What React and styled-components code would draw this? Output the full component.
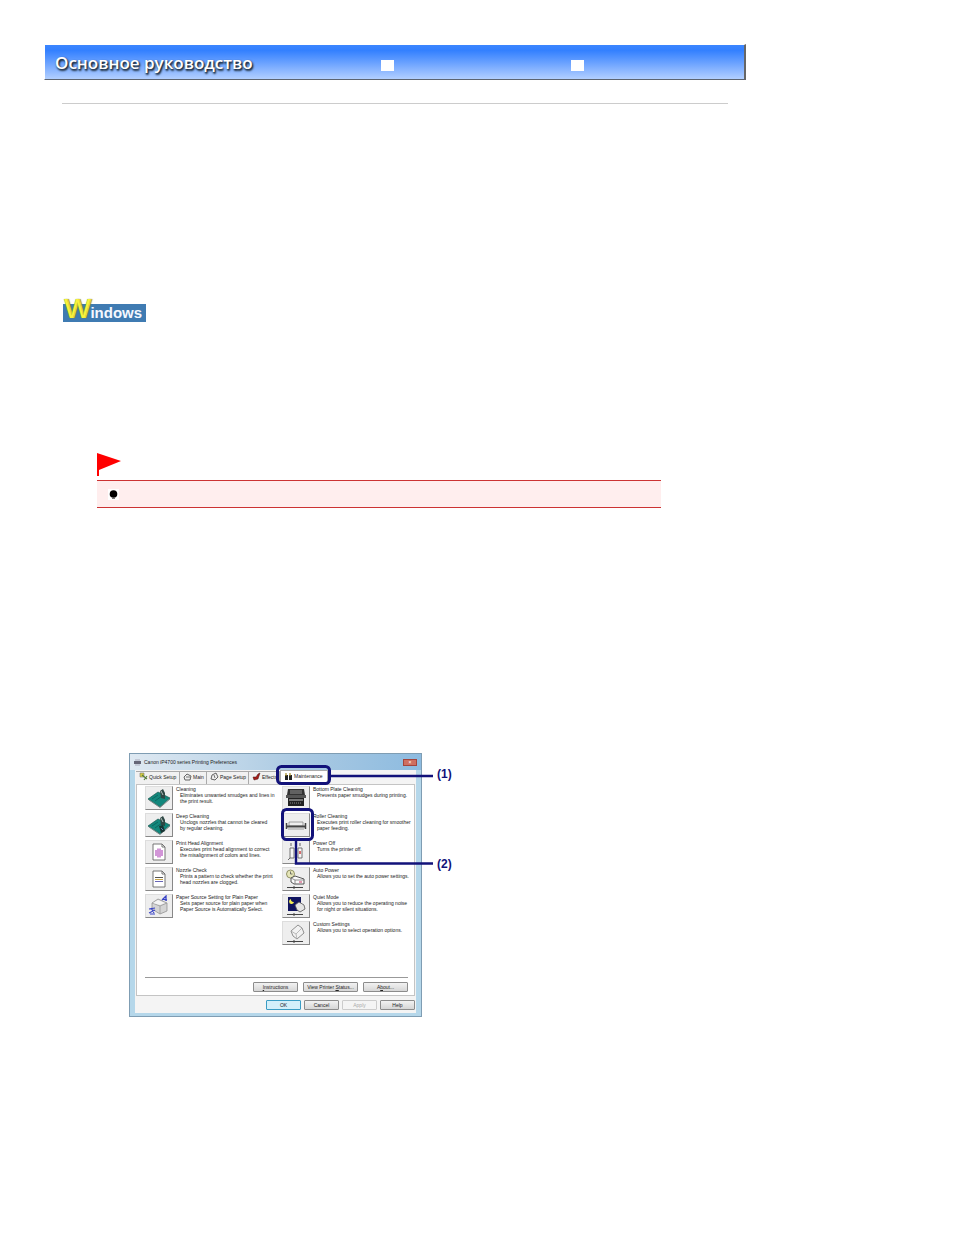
import styled, { createGlobalStyle } from "styled-components";

const tabs = [
  { id: "quick", label: "Quick Setup", width: 44 },
  { id: "main", label: "Main", width: 27 },
  { id: "page", label: "Page Setup", width: 42 },
  { id: "effects", label: "Effects", width: 31 },
  { id: "maintenance", label: "Maintenance", width: 48, active: true },
];

const leftTasks = [
  {
    icon: "cleaning",
    title: "Cleaning",
    lines: ["Eliminates unwanted smudges and lines in", "the print result."],
  },
  {
    icon: "deep",
    title: "Deep Cleaning",
    lines: ["Unclogs nozzles that cannot be cleared", "by regular cleaning."],
  },
  {
    icon: "alignment",
    title: "Print Head Alignment",
    lines: ["Executes print head alignment to correct", "the misalignment of colors and lines."],
  },
  {
    icon: "nozzle",
    title: "Nozzle Check",
    lines: ["Prints a pattern to check whether the print", "head nozzles are clogged."],
  },
  {
    icon: "source",
    title: "Paper Source Setting for Plain Paper",
    lines: ["Sets paper source for plain paper when", "Paper Source is Automatically Select."],
  },
];

const rightTasks = [
  {
    icon: "plate",
    title: "Bottom Plate Cleaning",
    lines: ["Prevents paper smudges during printing."],
  },
  {
    icon: "roller",
    title: "Roller Cleaning",
    lines: ["Executes print roller cleaning for smoother", "paper feeding."],
  },
  { icon: "off", title: "Power Off", lines: ["Turns the printer off."] },
  {
    icon: "auto",
    title: "Auto Power",
    lines: ["Allows you to set the auto power settings."],
  },
  {
    icon: "quiet",
    title: "Quiet Mode",
    lines: ["Allows you to reduce the operating noise", "for night or silent situations."],
  },
  {
    icon: "custom",
    title: "Custom Settings",
    lines: ["Allows you to select operation options."],
  },
];

const printHead = (
  <>
    <path d="M3 13 L13 6 L25 12 L15 21 Z" fill="#12877c" stroke="#1c5750" strokeWidth="0.7" />
    <path d="M4 14 L15 21.5 L25 13" fill="none" stroke="#7c8c8a" strokeWidth="1" />
    <path d="M7 13 L13 9 M10 15 L17 10" stroke="#0a6058" strokeWidth="0.8" />
    <path d="M15 5 L18 3 L20 7 L20 13 L16 12 Z" fill="#2e4744" />
    <path d="M16 5 L18 9" stroke="#cfdad8" strokeWidth="0.8" />
  </>
);

const stand = <path d="M5 20.5 H21 M12 19 V22" stroke="#444" strokeWidth="1" fill="none" />;

const taskIcons = {
  cleaning: printHead,
  deep: (
    <>
      {printHead}
      <path d="M14 13 L18 12 L20 18 L16 20 Z" fill="#183634" />
      <path d="M16 15 L18 17" stroke="#5c84b8" strokeWidth="1" />
    </>
  ),
  alignment: (
    <>
      <path d="M8 4 H17 L20 7 V20 H8 Z" fill="#fff" stroke="#666" strokeWidth="0.9" />
      <path d="M17 4 V7 H20" fill="none" stroke="#666" strokeWidth="0.9" />
      <path d="M11 10 V16 M13 8.5 V17.5 M15 8.5 V17.5 M17 10 V16" stroke="#b44fbd" strokeWidth="1.2" />
    </>
  ),
  nozzle: (
    <>
      <path d="M8 4 H17 L20 7 V20 H8 Z" fill="#fff" stroke="#666" strokeWidth="0.9" />
      <path d="M17 4 V7 H20" fill="none" stroke="#666" strokeWidth="0.9" />
      <path d="M10 10.5 H18" stroke="#555" />
      <path d="M10 12.5 H18" stroke="#c7a64a" />
      <path d="M10 14.5 H18" stroke="#6865b8" />
    </>
  ),
  source: (
    <>
      <path d="M7 9 L13 5 L22 9 L22 17 L15 20 L7 15 Z" fill="#d4d4d4" stroke="#888" strokeWidth="0.7" />
      <path d="M7 9 L15 12 L22 9 M15 12 V20" fill="none" stroke="#999" strokeWidth="0.8" />
      <path d="M8 9 L13 6 L20 9 L15 11 Z" fill="#f5f5f5" />
      <path d="M17 6 L21 2 V7 M18 5 L22 6" fill="none" stroke="#3943c6" strokeWidth="1.3" />
      <path d="M4 15 L10 14 M4 19 L10 16 M6 14 L9 19 M5 20 H10" fill="none" stroke="#3943c6" strokeWidth="1.1" />
    </>
  ),
  plate: (
    <>
      <path d="M6 3 H22 L23 9 H5 Z" fill="#333" />
      <path d="M8 5 H20 M8 7 H20" stroke="#aaa" strokeWidth="0.8" />
      <path d="M4 9 H24 V12 H4 Z" fill="#555" />
      <path d="M6 12 H22 V20 H6 Z" fill="#222" />
      <path d="M7 14 H21" stroke="#ccc" strokeWidth="1" />
      <path d="M8 17 H20" stroke="#888" strokeWidth="1" strokeDasharray="1 1" />
    </>
  ),
  roller: (
    <>
      <path d="M7 9 H21 V13 H7 Z" fill="#eee" stroke="#888" strokeWidth="0.8" />
      <path d="M4 12.5 H24 V14.5 H4 Z" fill="#444" />
      <path d="M4.5 10 V16 M23.5 10 V16" stroke="#444" strokeWidth="1.5" />
      <path d="M6 16 H22" stroke="#999" strokeWidth="1" />
    </>
  ),
  off: (
    <>
      <path d="M8 8 H12 V18 H8 Z M16 8 H20 V18 H16 Z" fill="#f7f7f7" stroke="#666" strokeWidth="0.9" />
      <path d="M9 3 V6 M18 3 V6 M8 18 L6 20" stroke="#666" strokeWidth="1" />
      <path d="M18 11 V14" stroke="#c33" strokeWidth="1.4" />
    </>
  ),
  auto: (
    <>
      <circle cx="8.5" cy="7" r="4" fill="#e6e6b8" stroke="#88885a" strokeWidth="0.9" />
      <path d="M8.5 4.5 V7 H10.5" fill="none" stroke="#555" strokeWidth="0.8" />
      <path d="M9 11 L13 9 L22 12 V17 H12 L9 15 Z" fill="#fafafa" stroke="#444" strokeWidth="0.9" />
      <path d="M9 11 L13 13 H22 M13 13 V17" fill="none" stroke="#777" strokeWidth="0.8" />
      <path d="M17 15 H20" stroke="#c36" strokeWidth="1" />
      {stand}
    </>
  ),
  quiet: (
    <>
      <path d="M6 3 H19 V17 H6 Z" fill="#10145f" />
      <path d="M9 5 A2.5 2.5 0 1 0 12 8 A2.5 2.5 0 0 1 9 5 Z" fill="#f4ef52" />
      <path d="M13 11 L17 8 L22 11 L23 15 L18 18 L15 16 Z" fill="#e4e4e4" stroke="#555" strokeWidth="0.8" />
      {stand}
    </>
  ),
  custom: (
    <>
      <path d="M9 10 L16 4 L20 7 L22 12 L15 18 L11 15 Z" fill="#f2f2f2" stroke="#777" strokeWidth="0.8" />
      <path d="M9 10 L14 13 L20 7 M14 13 L15 18" fill="none" stroke="#aaa" strokeWidth="0.8" />
      {stand}
    </>
  ),
};

const tabIcons = {
  quick: (
    <>
      <path d="M1 1 H5 V5 H1 Z" fill="#d7ce3d" stroke="#777" strokeWidth="0.6" />
      <path d="M3 3 L8 7 M5 8 L8 4" stroke="#567c3c" strokeWidth="1.2" />
    </>
  ),
  main: (
    <>
      <path d="M1 5 L4 2 L8 4 L7 8 H2 Z" fill="#eee" stroke="#555" strokeWidth="0.9" />
      <path d="M3 5 H7" stroke="#555" strokeWidth="0.8" />
    </>
  ),
  page: (
    <>
      <path d="M2 3 L6 1 L8 5 L5 8 L1 7 Z" fill="#eee" stroke="#555" strokeWidth="0.9" />
      <path d="M4 3 L5 6" stroke="#555" strokeWidth="0.8" />
    </>
  ),
  effects: <path d="M1 5 H4 L6 2 L8 1 L6 7 L2 8 Z" fill="#a51c18" stroke="#4b1714" strokeWidth="0.5" />,
  maintenance: (
    <>
      <path d="M1 3 H4 V8 H1 Z M5 3 H8 V8 H5 Z" fill="#222" />
      <path d="M2 1 V4 M6 1 V4" stroke="#a38b22" strokeWidth="1.2" />
    </>
  ),
};

function TaskList({ tasks }) {
  return (
    <Column>
      {tasks.map((task) => (
        <Task key={task.icon}>
          <TaskButton type="button" aria-label={task.title}>
            <svg width="26" height="22" viewBox="1 1 26 22">
              {taskIcons[task.icon]}
            </svg>
          </TaskButton>
          <TaskText>
            <dt>{task.title}</dt>
            {task.lines.map((line) => (
              <dd key={line}>{line}</dd>
            ))}
          </TaskText>
        </Task>
      ))}
    </Column>
  );
}

function PrinterDialog() {
  return (
    <Dialog>
      <TitleBar>
        <svg width="7" height="7" viewBox="0 0 7 7">
          <path d="M0 2 H7 V5 H0 Z" fill="#667" />
          <path d="M1 1 H6 M1 6 H6" stroke="#aab" />
        </svg>
        <span>Canon iP4700 series Printing Preferences</span>
        <CloseButton type="button" aria-label="Close">
          ×
        </CloseButton>
      </TitleBar>
      <Body>
        <TabBar role="tablist">
          {tabs.map((tab) => (
            <Tab key={tab.id} type="button" role="tab" aria-selected={!!tab.active} $width={tab.width} $active={tab.active}>
              <svg width="9" height="9" viewBox="0 0 9 9">
                {tabIcons[tab.id]}
              </svg>
              {tab.label}
            </Tab>
          ))}
        </TabBar>
        <Panel>
          <Columns>
            <TaskList tasks={leftTasks} />
            <TaskList tasks={rightTasks} />
          </Columns>
          <PanelActions>
            <DialogButton type="button" $width={45}>
              <span><u>I</u>nstructions</span>
            </DialogButton>
            <DialogButton type="button" $width={55}>
              <span>View Printer <u>S</u>tatus...</span>
            </DialogButton>
            <DialogButton type="button" $width={45}>
              <span>A<u>b</u>out...</span>
            </DialogButton>
          </PanelActions>
        </Panel>
        <DialogActions>
          <DialogButton type="button" $width={35} $primary>OK</DialogButton>
          <DialogButton type="button" $width={35}>Cancel</DialogButton>
          <DialogButton type="button" $width={35} disabled>Apply</DialogButton>
          <DialogButton type="button" $width={35}>Help</DialogButton>
        </DialogActions>
      </Body>
    </Dialog>
  );
}

export default function App() {
  return (
    <>
      <GlobalStyle />
      <Page>
        <Banner>
          <BannerTitle>Основное руководство</BannerTitle>
          <BannerLink href="#back" aria-label="Назад" />
          <BannerLink href="#next" aria-label="Далее" />
        </Banner>
        <Content>
          <Rule />
          <Platform>
            <PlatformInitial>W</PlatformInitial>indows
          </Platform>
          <Important>
            <svg width="24" height="23" viewBox="0 0 24 23">
              <path d="M0 0 L24 8 L2 17 V23 H0 Z" fill="#f00" />
            </svg>
            <Note>
              <svg width="11" height="11" viewBox="0 0 11 11">
                <path d="M0 0 H11 V11 H0 Z" fill="#fff" />
                <circle cx="5.5" cy="5" r="3.8" fill="#000" />
                <path d="M4 9.5 H7" stroke="#777" />
              </svg>
            </Note>
          </Important>
          <Figure>
            <PrinterDialog />
            <Callouts width="306" height="126" viewBox="0 0 306 126">
              <g fill="none" stroke="#12127a" strokeWidth="3">
                <rect x="148.5" y="13.5" width="52" height="17" rx="4" />
                <rect x="153.5" y="56.5" width="30" height="30" rx="4" />
                <path d="M201 23 H304 M167 87 V110.5 H304" strokeWidth="2.4" />
              </g>
            </Callouts>
            <Labels>
              <span>(1)</span>
              <span>(2)</span>
            </Labels>
          </Figure>
        </Content>
      </Page>
    </>
  );
}

const GlobalStyle = createGlobalStyle`
  * {
    box-sizing: border-box;
  }
  body {
    margin: 0;
    background: #fff;
    font-family: "Liberation Sans", Arial, sans-serif;
  }
  button {
    margin: 0;
    padding: 0;
    font: inherit;
    color: inherit;
  }
  svg {
    display: block;
    flex: none;
  }
`;

const Page = styled.main`
  max-width: 790px;
  padding: 44px;
`;

const Banner = styled.header`
  display: grid;
  grid-template-columns: 326px 190px 1fr;
  align-items: end;
  height: 36px;
  padding: 0 0 8px 10px;
  border: 1px solid transparent;
  border-right: 2px solid #666;
  border-bottom-color: #5c6470;
  background: linear-gradient(#3c86ff, #3380ff 16%, #6ea4ff 55%, #b2cfff) padding-box;
`;

const BannerTitle = styled.h1`
  margin: 0;
  font: 600 17px/16px "Open Sans", "Noto Sans", sans-serif;
  color: #fff;
  text-shadow: 1px 1px 2px #123, 1px 2px 2px #345;
`;

const BannerLink = styled.a`
  width: 13px;
  height: 11px;
  background: #fff;
`;

const Content = styled.article`
  padding: 0 18px;
`;

const Rule = styled.hr`
  height: 1px;
  margin: 23px 0 194px;
  border: 0;
  background: #ccc;
`;

const Platform = styled.h2`
  display: flex;
  align-items: flex-end;
  width: 83px;
  height: 24px;
  margin: 0 0 0 1px;
  padding: 0 0 1px 1px;
  background: linear-gradient(#3f7bb2, #3f7bb2) 0 6px / 100% 18px no-repeat;
  color: #f4f8ff;
  font-size: 15px;
  line-height: 16px;
`;

const PlatformInitial = styled.span`
  color: #f8f23c;
  font-size: 28px;
  font-weight: normal;
  line-height: 24px;
  text-shadow: 0 0 1px #7a8a30, 1px 0 0 #f8f23c, 2px 0 1px #7a8a30;
`;

const Important = styled.section`
  display: flex;
  flex-direction: column;
  gap: 4px;
  margin: 131px 67px 0 35px;
`;

const Note = styled.div`
  display: flex;
  align-items: center;
  height: 28px;
  padding-left: 11px;
  border: solid #c33;
  border-width: 1px 0;
  background: #fee;
`;

const Figure = styled.figure`
  position: relative;
  display: flex;
  align-items: flex-start;
  margin: 245px 0 0 67px;
`;

const Dialog = styled.section`
  width: 293px;
  padding: 0 5px 3px;
  border: 1px solid #7f9db3;
  background: #b5d7ea;
  color: #222;
  font-size: 5px;
  line-height: 6px;
`;

const TitleBar = styled.header`
  display: flex;
  align-items: center;
  gap: 3px;
  height: 16px;
  margin: 0 -5px;
  padding: 0 4px;
  background: linear-gradient(90deg, #dfe9f2, #a9c9e2 60%, #8dbbe0);
`;

const CloseButton = styled.button`
  width: 14px;
  height: 7px;
  margin-left: auto;
  border: 1px solid #a5443c;
  background: #cf6e60;
  color: #fff;
  line-height: 5px;
`;

const Body = styled.div`
  padding: 0 1px 3px;
  background: #f4f4f4;
`;

const TabBar = styled.div`
  display: flex;
  height: 14px;
  align-items: flex-end;
`;

const Tab = styled.button`
  display: flex;
  align-items: center;
  gap: 1px;
  width: ${(props) => props.$width}px;
  height: ${(props) => (props.$active ? 14 : 13)}px;
  padding: 0 0 3px 3px;
  border: 1px solid #aaa;
  border-bottom: 0;
  border-left-width: ${(props) => (props.$active ? 1 : 0)}px;
  background: ${(props) => (props.$active ? "#fff" : "#f1f1f1")};
  white-space: nowrap;
`;

const Panel = styled.div`
  padding: 1px 6px 3px 8px;
  border: 1px solid #c4c4c4;
  background: #fff;
`;

const Columns = styled.div`
  display: grid;
  grid-template-columns: 137px 1fr;
  padding-bottom: 32px;
`;

const Column = styled.div`
  display: flex;
  flex-direction: column;
  gap: 3px;
`;

const Task = styled.div`
  display: flex;
  gap: 3px;
  height: 24px;
`;

const TaskButton = styled.button`
  width: 28px;
  height: 24px;
  border: 1px solid #ddd;
  border-right-color: #888;
  border-bottom-color: #888;
  background: #eee;
`;

const TaskText = styled.dl`
  margin: 0;
  white-space: nowrap;

  dd {
    margin: 0 0 0 4px;
  }
`;

const PanelActions = styled.div`
  display: flex;
  justify-content: flex-end;
  gap: 5px;
  padding-top: 4px;
  border-top: 1px solid #999;
`;

const DialogActions = styled.div`
  display: flex;
  justify-content: flex-end;
  gap: 3px;
  padding-top: 4px;
`;

const DialogButton = styled.button`
  width: ${(props) => props.$width}px;
  height: 10px;
  border: 1px solid ${(props) => (props.$primary ? "#3a9cc4" : props.disabled ? "#ccc" : "#8c8c8c")};
  border-radius: 1px;
  background: ${(props) => (props.$primary ? "#d3effa" : props.disabled ? "#f4f4f4" : "linear-gradient(#f2f2f2, #d6d6d6)")};
  color: ${(props) => (props.disabled ? "#aaa" : "#222")};
  white-space: nowrap;
`;

const Callouts = styled.svg`
  position: absolute;
  top: 0;
  left: 0;
`;

const Labels = styled.figcaption`
  display: flex;
  flex-direction: column;
  gap: 74px;
  padding: 13px 0 0 15px;
  color: #12127a;
  font-size: 12px;
  font-weight: bold;
  line-height: 16px;
`;
